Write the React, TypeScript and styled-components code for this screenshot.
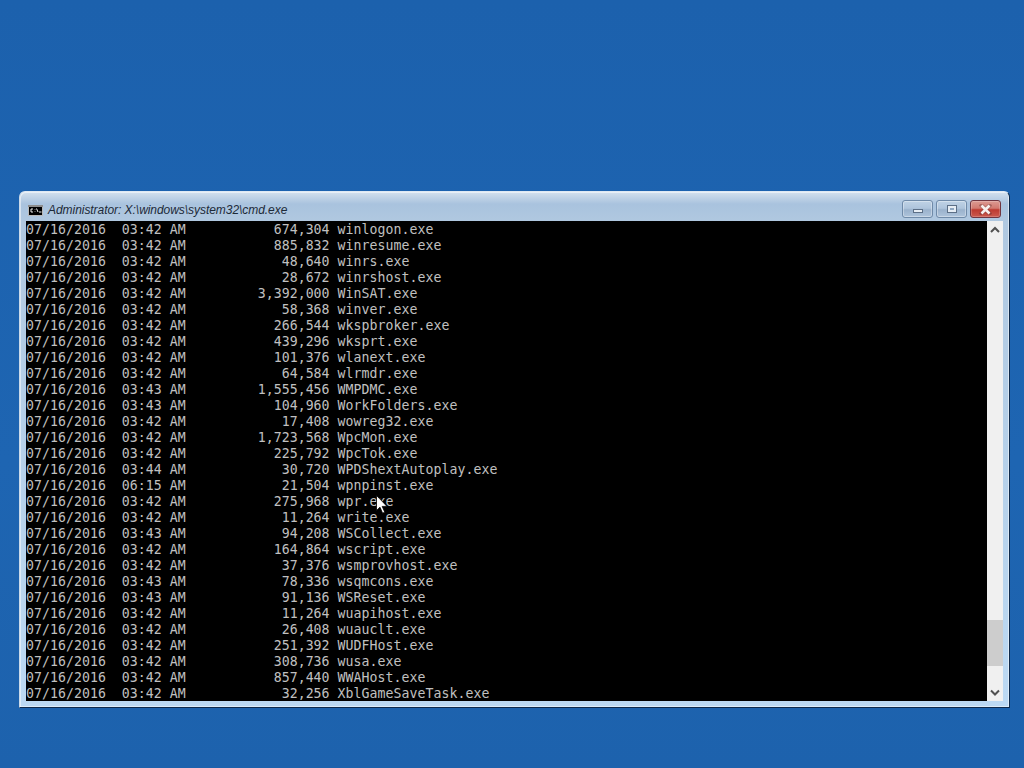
import React from "react";
import styled, { createGlobalStyle } from "styled-components";

const Global = createGlobalStyle`
  html, body { margin: 0; padding: 0; background: #1d63ae; }
  #root { width: 1024px; height: 768px; overflow: hidden; }
`;

const Desktop = styled.div`
  position: relative;
  width: 1024px;
  height: 768px;
  box-sizing: border-box;
  padding: 191px 14px 0 19px;
  background: linear-gradient(180deg, #1c61ad 0%, #1e65b2 60%, #1d62ad 100%);
`;

const Win = styled.div`
  width: 991px;
  height: 517px;
  box-sizing: border-box;
  display: flex;
  flex-direction: column;
  border: 1px solid #0e2a4c;
  border-top-color: #dfe9f3;
  border-left-color: #c9d9e9;
  border-radius: 6px 6px 0 0;
  background: linear-gradient(180deg, #d3e1ee 0px, #a9c3de 12px, #b0c8e0 29px, #bcd9f3 100%);
  box-shadow: inset 1px 1px 0 rgba(255, 255, 255, 0.5), inset -1px -1px 0 rgba(255, 255, 255, 0.5);
`;

const TitleBar = styled.div`
  height: 29px;
  flex: none;
  display: flex;
  align-items: flex-end;
  box-sizing: border-box;
  padding: 0 8px 3px 8px;
`;

const AppIcon = styled.svg`
  width: 15px;
  height: 11px;
  margin-right: 5px;
  margin-bottom: 2px;
  flex: none;
`;

const Title = styled.div`
  flex: 1;
  font: italic 12px/16px "Liberation Sans", Arial, sans-serif;
  color: #1d2a38;
  letter-spacing: -0.05px;
  white-space: nowrap;
`;

const Controls = styled.div`
  display: flex;
  gap: 3px;
`;

const Ctl = styled.div<{ $close?: boolean }>`
  width: 31px;
  height: 18px;
  box-sizing: border-box;
  display: flex;
  align-items: center;
  justify-content: center;
  border: 1px solid ${(p) => (p.$close ? "#6f3540" : "#6f8aa8")};
  border-radius: 3px;
  box-shadow: inset 0 0 0 1px rgba(255, 255, 255, ${(p) => (p.$close ? 0.2 : 0.35)});
  background: ${(p) =>
    p.$close
      ? "linear-gradient(180deg, #dc9a92 0%, #d27a70 45%, #bd3a30 55%, #cb5a4e 100%)"
      : "linear-gradient(180deg, #bfd2e5 0%, #afc5dc 45%, #9ab2cc 55%, #aec4db 100%)"};
`;

const MinGlyph = styled.div`
  width: 8px;
  height: 2px;
  margin-top: 3px;
  background: #e6edf4;
  border: 1px solid #5c6f86;
`;

const MaxGlyph = styled.div`
  width: 4px;
  height: 2px;
  background: #8fa7c1;
  border: 2px solid #e6edf4;
  outline: 1px solid #5c6f86;
`;

const CloseGlyph = styled.svg`
  width: 13px;
  height: 11px;
`;

const Body = styled.div`
  flex: 1;
  display: flex;
  margin: 0 6px 6px 6px;
  min-height: 0;
`;

const Console = styled.div`
  width: 961px;
  flex: none;
  overflow: hidden;
  box-sizing: border-box;
  padding-top: 1px;
  background: #000;
  color: #c0c0c0;
  font: 13.2px/16px "DejaVu Sans Mono", "Liberation Mono", monospace;
`;

const Row = styled.div`
  height: 16px;
  white-space: pre;
  letter-spacing: 0.05px;
`;

const ScrollBar = styled.div`
  width: 16px;
  flex: none;
  display: flex;
  flex-direction: column;
  background: #f0f0f0;
`;

const Arrow = styled.svg`
  width: 16px;
  height: 17px;
  flex: none;
`;

const Track = styled.div`
  flex: 1;
  display: flex;
  flex-direction: column;
  justify-content: flex-end;
  padding-bottom: 18px;
`;

const Thumb = styled.div`
  height: 46px;
  background: #cdcdcd;
`;

const Pointer = styled.svg`
  position: absolute;
  left: 376px;
  top: 495px;
  width: 12px;
  height: 20px;
`;

const files: [string, string, string][] = [
  ["03:42", "674,304", "winlogon.exe"],
  ["03:42", "885,832", "winresume.exe"],
  ["03:42", "48,640", "winrs.exe"],
  ["03:42", "28,672", "winrshost.exe"],
  ["03:42", "3,392,000", "WinSAT.exe"],
  ["03:42", "58,368", "winver.exe"],
  ["03:42", "266,544", "wkspbroker.exe"],
  ["03:42", "439,296", "wksprt.exe"],
  ["03:42", "101,376", "wlanext.exe"],
  ["03:42", "64,584", "wlrmdr.exe"],
  ["03:43", "1,555,456", "WMPDMC.exe"],
  ["03:43", "104,960", "WorkFolders.exe"],
  ["03:42", "17,408", "wowreg32.exe"],
  ["03:42", "1,723,568", "WpcMon.exe"],
  ["03:42", "225,792", "WpcTok.exe"],
  ["03:44", "30,720", "WPDShextAutoplay.exe"],
  ["06:15", "21,504", "wpnpinst.exe"],
  ["03:42", "275,968", "wpr.exe"],
  ["03:42", "11,264", "write.exe"],
  ["03:43", "94,208", "WSCollect.exe"],
  ["03:42", "164,864", "wscript.exe"],
  ["03:42", "37,376", "wsmprovhost.exe"],
  ["03:43", "78,336", "wsqmcons.exe"],
  ["03:43", "91,136", "WSReset.exe"],
  ["03:42", "11,264", "wuapihost.exe"],
  ["03:42", "26,408", "wuauclt.exe"],
  ["03:42", "251,392", "WUDFHost.exe"],
  ["03:42", "308,736", "wusa.exe"],
  ["03:42", "857,440", "WWAHost.exe"],
  ["03:42", "32,256", "XblGameSaveTask.exe"],
];

export default function App() {
  return (
    <Desktop>
      <Global />
      <Win>
        <TitleBar>
          <AppIcon viewBox="0 0 15 11">
            <rect x="0" y="0" width="15" height="11" fill="#b9b9b9" />
            <rect x="0" y="0" width="15" height="2" fill="#8d8d8d" />
            <rect x="1" y="2" width="13" height="8" fill="#000" />
            <path d="M5 4H3v3h2M7 6.5v.5M7 4.5v.5M8.5 3.5l1.5 3.5M11 7h2.5" stroke="#eeeeee" strokeWidth="1" fill="none" />
          </AppIcon>
          <Title>Administrator: X:\windows\system32\cmd.exe</Title>
          <Controls>
            <Ctl>
              <MinGlyph />
            </Ctl>
            <Ctl>
              <MaxGlyph />
            </Ctl>
            <Ctl $close>
              <CloseGlyph viewBox="0 0 13 11">
                <path d="M2.5 1.5l8 8M10.5 1.5l-8 8" stroke="#5b2a2a" strokeWidth="4" strokeLinecap="square" opacity="0.35" />
                <path d="M2.5 1.5l8 8M10.5 1.5l-8 8" stroke="#f6f0ee" strokeWidth="2.6" />
              </CloseGlyph>
            </Ctl>
          </Controls>
        </TitleBar>
        <Body>
          <Console>
            {files.map(([time, size, name]) => (
              <Row key={name}>{`07/16/2016  ${time} AM ${size.padStart(17, " ")} ${name}`}</Row>
            ))}
          </Console>
          <ScrollBar>
            <Arrow viewBox="0 0 16 17">
              <path d="M4 11l4-4 4 4" stroke="#505050" strokeWidth="2" fill="none" />
            </Arrow>
            <Track>
              <Thumb />
            </Track>
            <Arrow viewBox="0 0 16 17">
              <path d="M4 6.5l4 4 4-4" stroke="#505050" strokeWidth="2" fill="none" />
            </Arrow>
          </ScrollBar>
        </Body>
      </Win>
      <Pointer viewBox="0 0 12 20">
        <path d="M0.5 0.5v15l3.5-3.3 2.6 6 2.2-1-2.6-5.8h4.8z" fill="#fff" stroke="#000" strokeWidth="0.8" />
      </Pointer>
    </Desktop>
  );
}
